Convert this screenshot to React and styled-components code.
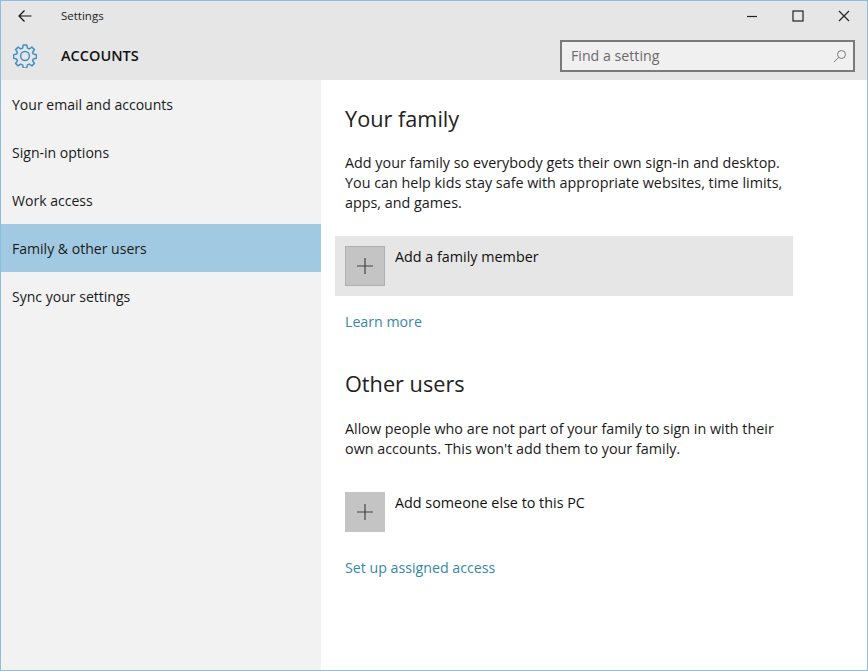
import React from "react";
import styled, { createGlobalStyle } from "styled-components";

const GlobalStyle = createGlobalStyle`
  html, body {
    margin: 0;
    padding: 0;
    height: 100%;
    background: #fff;
  }
  #root {
    height: 100%;
  }
`;

const font = `"Open Sans", "Noto Sans", "Liberation Sans", sans-serif`;

const Window = styled.div`
  box-sizing: border-box;
  width: 868px;
  height: 671px;
  border: 1px solid #8dbfdc;
  display: flex;
  flex-direction: column;
  font-family: ${font};
  color: #111;
  overflow: hidden;
`;

const Header = styled.header`
  height: 79px;
  flex: none;
  background: #e6e6e6;
  display: flex;
  flex-direction: column;
`;

const TitleBar = styled.div`
  height: 30px;
  display: flex;
  align-items: center;
`;

const BackButton = styled.div`
  width: 48px;
  height: 30px;
  display: flex;
  align-items: center;
  justify-content: center;
`;

const WindowTitle = styled.div`
  margin: -2px 0 0 12px;
  font-size: 11.5px;
  color: #222;
  flex: 1;
`;

const WindowButton = styled.div`
  width: 46px;
  height: 30px;
  display: flex;
  align-items: center;
  justify-content: center;
`;

const SubBar = styled.div`
  flex: 1;
  display: flex;
  align-items: center;
  padding: 0 12px;
`;

const Gear = styled.svg`
  width: 24px;
  height: 24px;
  flex: none;
  fill: none;
  stroke: #4390c2;
  stroke-width: 1.5;
  stroke-linejoin: round;
`;

const SectionName = styled.div`
  margin-left: 24px;
  font-size: 14.5px;
  font-weight: 600;
  color: #111;
  flex: 1;
`;

const SearchBox = styled.div`
  box-sizing: border-box;
  width: 295px;
  height: 32px;
  border: 2px solid #7a7a7a;
  background: #f0f0f0;
  display: flex;
  align-items: center;
  justify-content: space-between;
  padding: 0 6px 0 9px;
  font-size: 14.2px;
  color: #6b6b6b;
`;

const Body = styled.div`
  flex: 1;
  display: flex;
  min-height: 0;
`;

const Sidebar = styled.nav`
  width: 320px;
  flex: none;
  background: #f2f2f2;
`;

const NavItem = styled.div`
  height: 48px;
  display: flex;
  align-items: center;
  padding-left: 11px;
  font-size: 14.05px;
  color: #1a1a1a;
  background: ${(props) => (props.$active ? "#a1cae2" : "transparent")};
`;

const Main = styled.main`
  flex: 1;
  background: #fff;
  padding: 22px 0 0 24px;
`;

const Section = styled.section`
  margin-top: ${(props) => props.$top || 0}px;
`;

const Heading = styled.h2`
  margin: 0;
  font-size: 21.7px;
  font-weight: 400;
  line-height: 34px;
  color: #222;
`;

const Paragraph = styled.p`
  margin: ${(props) => props.$top}px 0 0;
  width: 445px;
  font-size: 14.35px;
  line-height: 20px;
  color: #1a1a1a;
`;

const AddRow = styled.div`
  box-sizing: border-box;
  margin-left: -10px;
  margin-top: ${(props) => props.$top}px;
  width: 458px;
  height: 60px;
  padding: 10px;
  display: flex;
  gap: 10px;
  background: ${(props) => (props.$hover ? "#e6e6e6" : "transparent")};
`;

const PlusTile = styled.div`
  box-sizing: border-box;
  width: 40px;
  height: 40px;
  background: #c4c4c4;
  border: ${(props) => (props.$hover ? "1px solid #b0b0b0" : "none")};
  display: flex;
  align-items: center;
  justify-content: center;
`;

const AddLabel = styled.div`
  padding-top: 1px;
  font-size: 14.35px;
  line-height: 20px;
  color: #111;
`;

const TextLink = styled.div`
  margin-top: 16px;
  font-size: 14.2px;
  line-height: 20px;
  color: #3589a6;
`;

const Plus = () => (
  <svg width="18" height="18" viewBox="0 0 18 18" fill="none" stroke="#444" strokeWidth="1.2">
    <path d="M9 1v16M1 9h16" />
  </svg>
);

const App = () => {
  const items = [
    "Your email and accounts",
    "Sign-in options",
    "Work access",
    "Family & other users",
    "Sync your settings",
  ];

  return (
    <>
      <GlobalStyle />
      <Window>
        <Header>
          <TitleBar>
            <BackButton>
              <svg width="14" height="14" viewBox="0 0 14 14" fill="none" stroke="#111" strokeWidth="1.2">
                <path d="M13.5 7H1M6.5 1.5 1 7l5.5 5.5" />
              </svg>
            </BackButton>
            <WindowTitle>Settings</WindowTitle>
            <WindowButton>
              <svg width="12" height="12" viewBox="0 0 12 12" fill="none" stroke="#222" strokeWidth="1.2">
                <path d="M1 6.5h10" />
              </svg>
            </WindowButton>
            <WindowButton>
              <svg width="12" height="12" viewBox="0 0 12 12" fill="none" stroke="#222" strokeWidth="1.2">
                <rect x="1" y="1" width="10" height="10" />
              </svg>
            </WindowButton>
            <WindowButton>
              <svg width="12" height="12" viewBox="0 0 12 12" fill="none" stroke="#222" strokeWidth="1.2">
                <path d="M1 1l10 10M11 1 1 11" />
              </svg>
            </WindowButton>
          </TitleBar>
          <SubBar>
            <Gear viewBox="0 0 24 24">
              <circle cx="12" cy="12" r="4.4" />
              <path d="M10.2 1h3.6l.6 3.1 1.9.8 2.6-1.8 2.5 2.5-1.8 2.6.8 1.9 3 .6v3.6l-3 .6-.8 1.9 1.8 2.6-2.5 2.5-2.6-1.8-1.9.8-.6 3.1h-3.6l-.6-3.1-1.9-.8-2.6 1.8-2.5-2.5 1.8-2.6-.8-1.9-3-.6v-3.6l3-.6.8-1.9-1.8-2.6 2.5-2.5 2.6 1.8 1.9-.8z" />
            </Gear>
            <SectionName>ACCOUNTS</SectionName>
            <SearchBox>
              Find a setting
              <svg width="14" height="14" viewBox="0 0 14 14" fill="none" stroke="#777" strokeWidth="1">
                <circle cx="8.5" cy="5.5" r="4" />
                <path d="M5.5 8.5 1 13" />
              </svg>
            </SearchBox>
          </SubBar>
        </Header>
        <Body>
          <Sidebar>
            {items.map((item) => (
              <NavItem key={item} $active={item === "Family & other users"}>
                {item}
              </NavItem>
            ))}
          </Sidebar>
          <Main>
            <Section>
              <Heading>Your family</Heading>
              <Paragraph $top={17}>
                Add your family so everybody gets their own sign-in and desktop.
                You can help kids stay safe with appropriate websites, time limits,
                apps, and games.
              </Paragraph>
              <AddRow $hover $top={23}>
                <PlusTile $hover>
                  <Plus />
                </PlusTile>
                <AddLabel>Add a family member</AddLabel>
              </AddRow>
              <TextLink>Learn more</TextLink>
            </Section>
            <Section $top={35}>
              <Heading>Other users</Heading>
              <Paragraph $top={18}>
                Allow people who are not part of your family to sign in with their
                own accounts. This won't add them to your family.
              </Paragraph>
              <AddRow $top={23}>
                <PlusTile>
                  <Plus />
                </PlusTile>
                <AddLabel>Add someone else to this PC</AddLabel>
              </AddRow>
              <TextLink>Set up assigned access</TextLink>
            </Section>
          </Main>
        </Body>
      </Window>
    </>
  );
};

export default App;
